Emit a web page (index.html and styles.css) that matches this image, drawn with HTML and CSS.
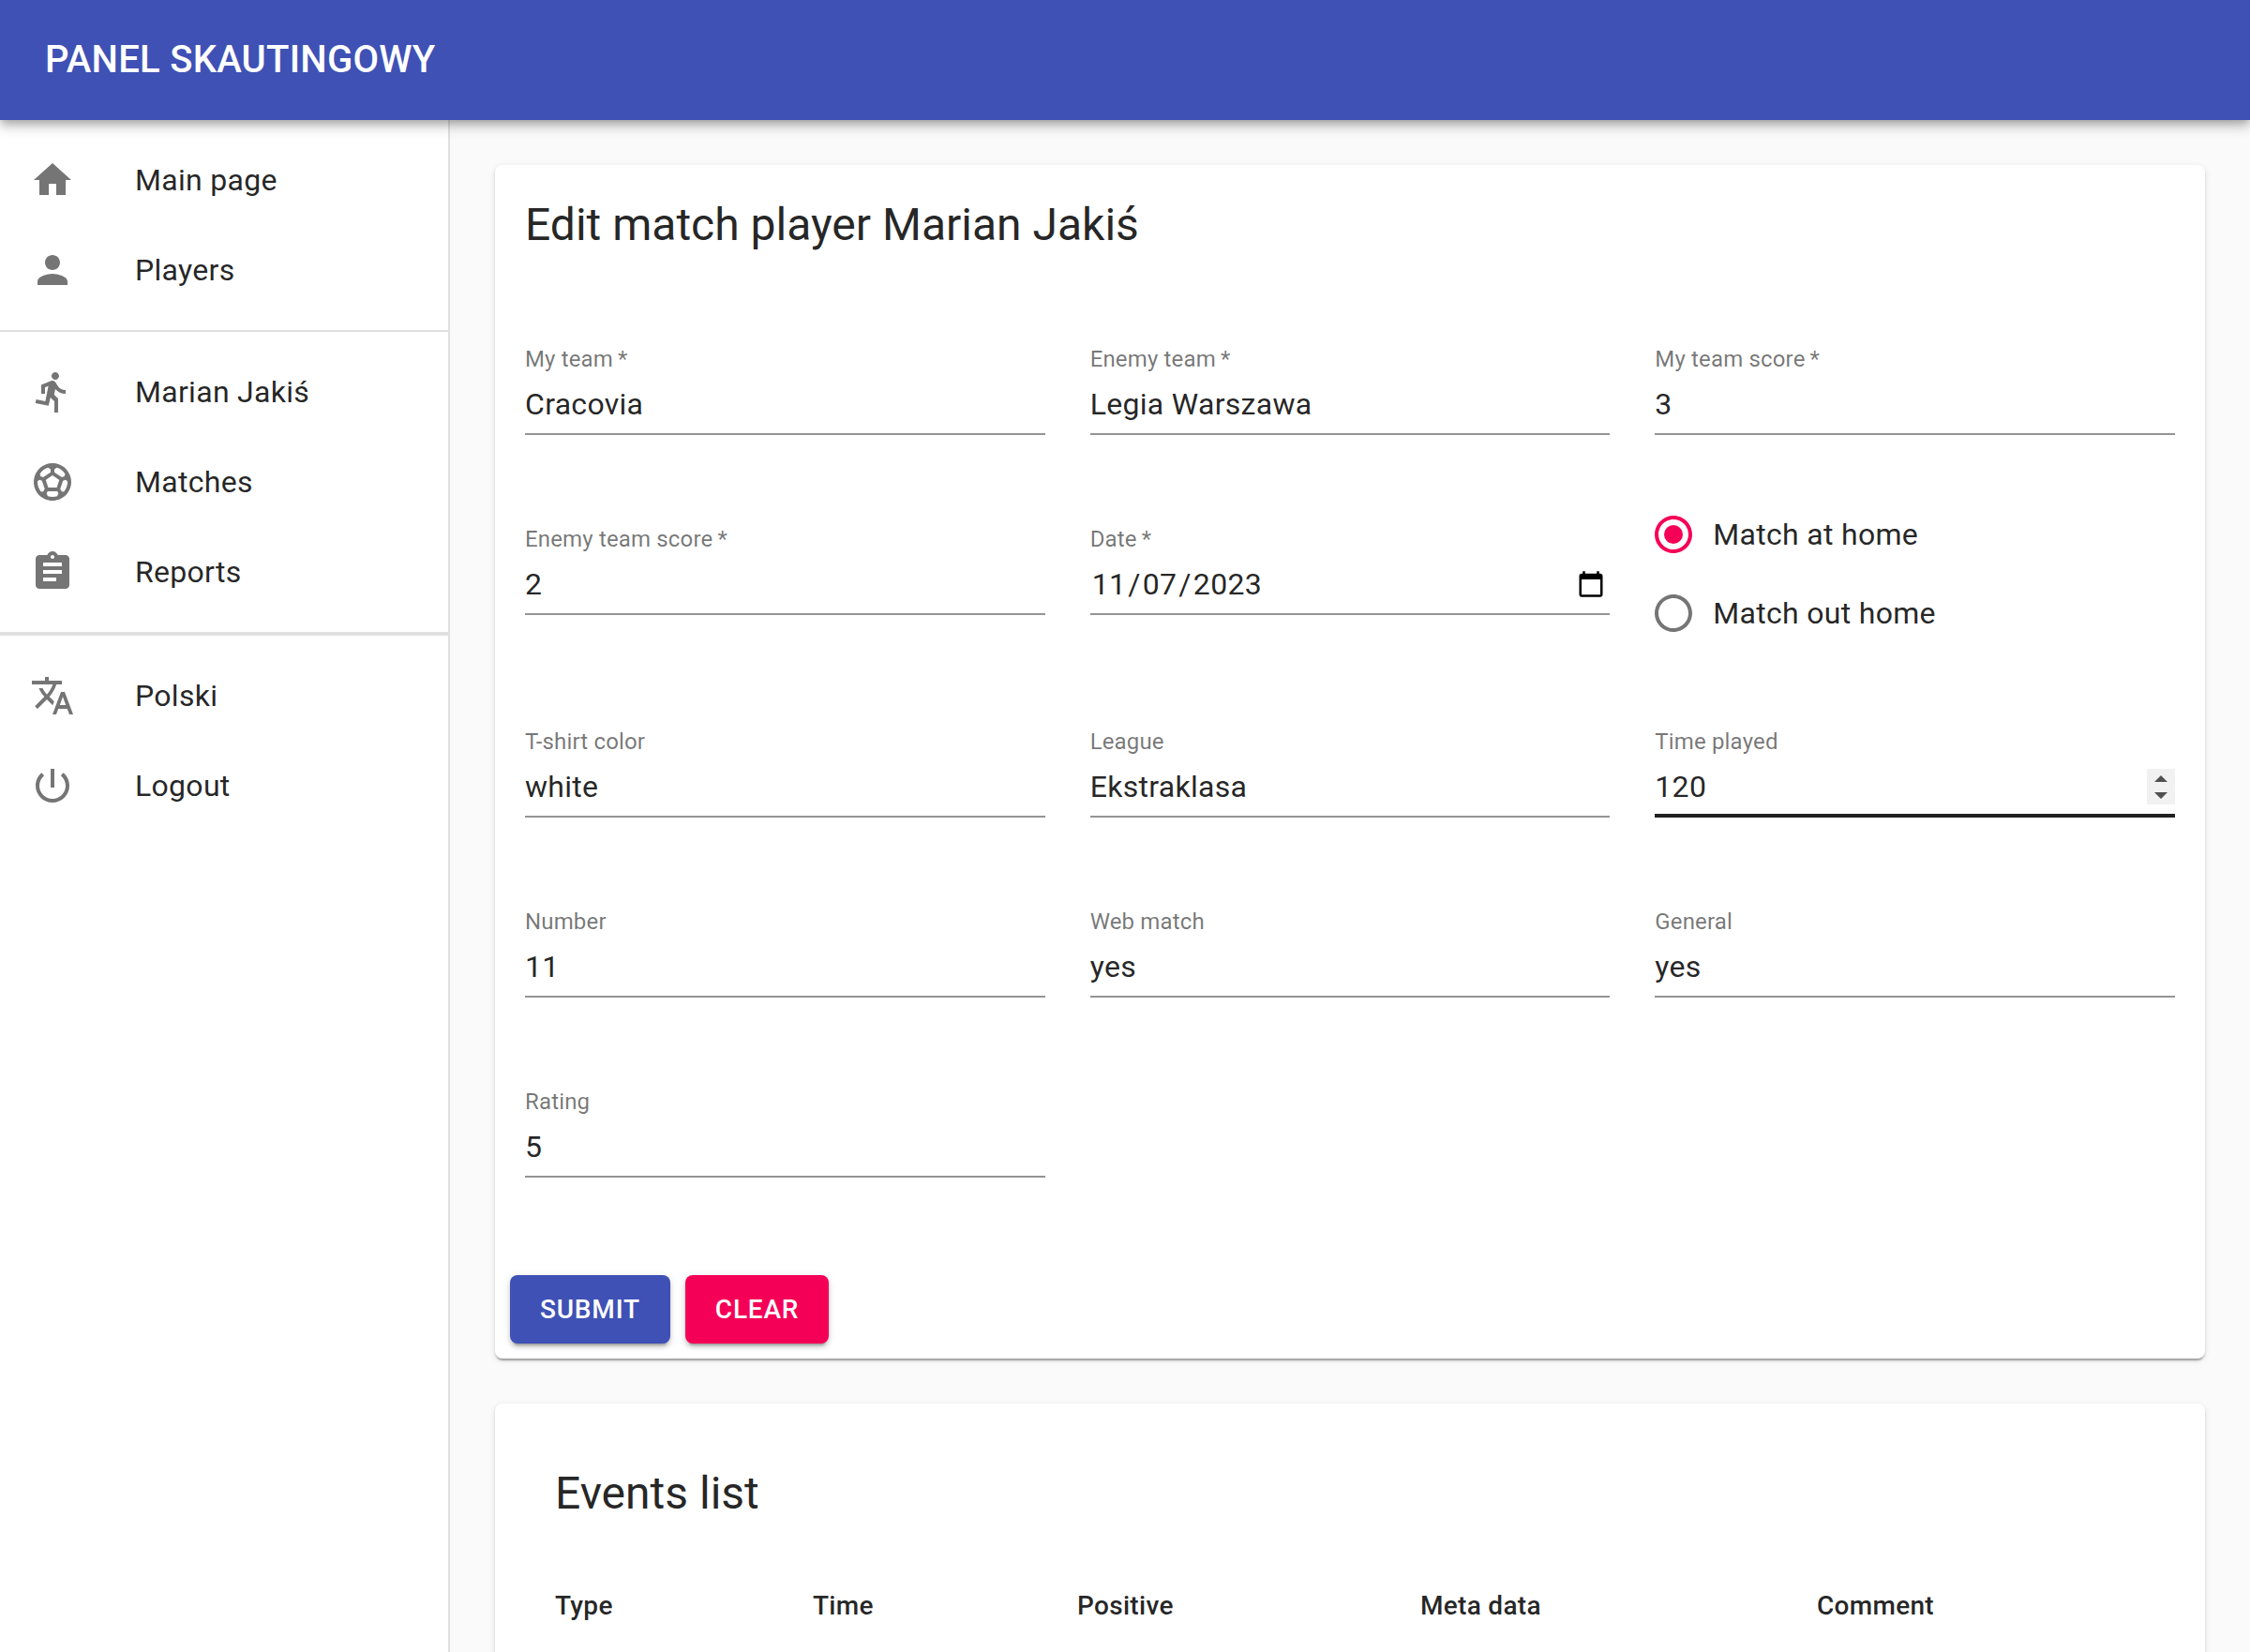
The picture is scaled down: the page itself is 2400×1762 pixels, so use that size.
FILE: index.html
```html
<!DOCTYPE html>
<html lang="en">
<head>
<meta charset="utf-8">
<title>Panel skautingowy</title>
<link rel="stylesheet" href="styles.css">
</head>
<body>
<div class="app">
  <header class="app-bar"><h1 class="app-title">PANEL SKAUTINGOWY</h1></header>
  <div class="layout">
    <nav class="drawer">
      <ul class="nav-list">
        <li class="nav-item"><svg class="icon" viewBox="0 0 24 24"><path d="M10 20v-6h4v6h5v-8h3L12 3 2 12h3v8z"/></svg><span>Main page</span></li>
        <li class="nav-item"><svg class="icon" viewBox="0 0 24 24"><path d="M12 12c2.21 0 4-1.79 4-4s-1.79-4-4-4-4 1.79-4 4 1.79 4 4 4zm0 2c-2.67 0-8 1.34-8 4v2h16v-2c0-2.66-5.33-4-8-4z"/></svg><span>Players</span></li>
      </ul>
      <hr class="divider">
      <ul class="nav-list">
        <li class="nav-item"><svg class="icon" viewBox="0 0 24 24"><path d="M13.49 5.48c1.1 0 2-.9 2-2s-.9-2-2-2-2 .9-2 2 .9 2 2 2zm-3.6 13.9l1-4.4 2.1 2v6h2v-7.5l-2.1-2 .6-3c1.3 1.5 3.3 2.5 5.5 2.5v-2c-1.9 0-3.5-1-4.3-2.4l-1-1.6c-.4-.6-1-1-1.7-1-.3 0-.5.1-.8.1l-5.2 2.2v4.7h2v-3.4l1.8-.7-1.6 8.1-4.9-1-.4 2 7 1.4z"/></svg><span>Marian Jakiś</span></li>
        <li class="nav-item"><svg class="icon" viewBox="0 0 24 24"><path d="M12 2C6.48 2 2 6.48 2 12s4.48 10 10 10 10-4.48 10-10S17.52 2 12 2zm1 3.3l1.35-.95c1.82.56 3.37 1.76 4.38 3.34l-.39 1.34-1.35.46L13 6.9V5.3zm-3.35-.95L11 5.3v1.6L7.01 9.49l-1.35-.46-.39-1.34c1.01-1.57 2.56-2.77 4.38-3.34zM7.08 17.11l-1.14.1C4.73 15.81 4 13.99 4 12c0-.12.01-.23.02-.35l1-.73 1.38.48 1.46 4.34-.78 1.37zm7.42 2.48c-.79.26-1.63.41-2.5.41s-1.71-.15-2.5-.41l-.69-1.49.64-1.1h5.11l.64 1.11-.7 1.48zM14.27 15H9.73l-1.35-4.02L12 8.44l3.63 2.54L14.27 15zm3.79 2.21l-1.14-.1-.79-1.37 1.46-4.34 1.39-.47 1 .73c.01.11.02.22.02.34 0 1.99-.73 3.81-1.94 5.21z"/></svg><span>Matches</span></li>
        <li class="nav-item"><svg class="icon" viewBox="0 0 24 24"><path d="M19 3h-4.18C14.4 1.84 13.3 1 12 1c-1.3 0-2.4.84-2.82 2H5c-1.1 0-2 .9-2 2v14c0 1.1.9 2 2 2h14c1.1 0 2-.9 2-2V5c0-1.1-.9-2-2-2zm-7 0c.55 0 1 .45 1 1s-.45 1-1 1-1-.45-1-1 .45-1 1-1zm2 14H7v-2h7v2zm3-4H7v-2h10v2zm0-4H7V7h10v2z"/></svg><span>Reports</span></li>
      </ul>
      <hr class="divider">
      <hr class="divider">
      <ul class="nav-list">
        <li class="nav-item"><svg class="icon" viewBox="0 0 24 24"><path d="M12.87 15.07l-2.54-2.51.03-.03c1.74-1.94 2.98-4.17 3.71-6.53H17V4h-7V2H8v2H1v1.99h11.17C11.5 7.92 10.44 9.75 9 11.35 8.07 10.32 7.3 9.19 6.69 8h-2c.73 1.63 1.73 3.17 2.98 4.56l-5.09 5.02L4 19l5-5 3.11 3.11.76-2.04zM18.5 10h-2L12 22h2l1.12-3h4.75L21 22h2l-4.5-12zm-2.62 7l1.62-4.33L19.12 17h-3.24z"/></svg><span>Polski</span></li>
        <li class="nav-item"><svg class="icon" viewBox="0 0 24 24"><path d="M13 3h-2v10h2V3zm4.83 2.17l-1.42 1.42C17.99 7.86 19 9.81 19 12c0 3.87-3.13 7-7 7s-7-3.13-7-7c0-2.19 1.01-4.14 2.58-5.42L6.17 5.17C4.23 6.82 3 9.26 3 12c0 4.97 4.03 9 9 9s9-4.03 9-9c0-2.74-1.23-5.18-3.17-6.83z"/></svg><span>Logout</span></li>
      </ul>
    </nav>
    <main class="content">
      <section class="card">
        <h2 class="card-title">Edit match player Marian Jakiś</h2>
        <div class="form-grid">
          <div class="field"><span class="label">My team&thinsp;*</span><div class="value">Cracovia</div></div>
          <div class="field"><span class="label">Enemy team&thinsp;*</span><div class="value">Legia Warszawa</div></div>
          <div class="field"><span class="label">My team score&thinsp;*</span><div class="value">3</div></div>
          <div class="field"><span class="label">Enemy team score&thinsp;*</span><div class="value">2</div></div>
          <div class="field"><span class="label">Date&thinsp;*</span>
            <div class="value">
              <span class="date"><span class="date-part">11</span>/<span class="date-part">07</span>/<span class="date-part">2023</span></span>
              <svg class="calendar" viewBox="0 0 24 24"><path d="M20 3h-1V1h-2v2H7V1H5v2H4c-1.1 0-2 .9-2 2v16c0 1.1.9 2 2 2h16c1.1 0 2-.9 2-2V5c0-1.1-.9-2-2-2zm0 18H4V8h16v13z"/></svg>
            </div>
          </div>
          <div class="radio-group">
            <div class="radio radio-checked"><svg class="icon" viewBox="0 0 24 24"><path d="M12 2C6.48 2 2 6.48 2 12s4.48 10 10 10 10-4.48 10-10S17.52 2 12 2zm0 18c-4.42 0-8-3.58-8-8s3.58-8 8-8 8 3.58 8 8-3.58 8-8 8z"/><circle cx="12" cy="12" r="5"/></svg><span>Match at home</span></div>
            <div class="radio"><svg class="icon" viewBox="0 0 24 24"><path d="M12 2C6.48 2 2 6.48 2 12s4.48 10 10 10 10-4.48 10-10S17.52 2 12 2zm0 18c-4.42 0-8-3.58-8-8s3.58-8 8-8 8 3.58 8 8-3.58 8-8 8z"/></svg><span>Match out home</span></div>
          </div>
          <div class="field"><span class="label">T-shirt color</span><div class="value">white</div></div>
          <div class="field"><span class="label">League</span><div class="value">Ekstraklasa</div></div>
          <div class="field"><span class="label">Time played</span>
            <div class="value value-active">120
              <svg class="spinner" viewBox="0 0 30 38"><path class="spinner-track" d="M0 0h30v38H0z"/><path d="M8 14l7-7 7 7zM8 25h14l-7 7z"/></svg>
            </div>
          </div>
          <div class="field"><span class="label">Number</span><div class="value">11</div></div>
          <div class="field"><span class="label">Web match</span><div class="value">yes</div></div>
          <div class="field"><span class="label">General</span><div class="value">yes</div></div>
          <div class="field"><span class="label">Rating</span><div class="value">5</div></div>
        </div>
        <div class="actions">
          <button class="button button-primary">SUBMIT</button>
          <button class="button button-secondary">CLEAR</button>
        </div>
      </section>
      <section class="card events">
        <h2 class="events-title">Events list</h2>
        <div class="table-head">
          <span>Type</span><span>Time</span><span>Positive</span><span>Meta data</span><span>Comment</span>
        </div>
      </section>
    </main>
  </div>
</div>
</body>
</html>
```
FILE: styles.css
```css
* { box-sizing: border-box; }

body {
  margin: 0;
  background: #fafafa;
  color: rgba(0, 0, 0, 0.87);
  font-family: Roboto, "Liberation Sans", sans-serif;
  font-size: 32px;
  line-height: 48px;
  letter-spacing: 0.00938em;
  -webkit-font-smoothing: antialiased;
}

.app {
  display: flex;
  flex-direction: column;
  height: 1762px;
  overflow: hidden;
}

.app-bar {
  display: flex;
  flex: none;
  align-items: center;
  height: 128px;
  padding: 0 48px;
  position: relative;
  z-index: 2;
  background: #3f51b5;
  color: #fff;
  box-shadow: 0 4px 8px -2px rgba(0, 0, 0, 0.2), 0 8px 10px 0 rgba(0, 0, 0, 0.14), 0 2px 20px 0 rgba(0, 0, 0, 0.12);
}

.app-title {
  margin: 0;
  font-size: 40px;
  font-weight: 500;
  line-height: 64px;
  letter-spacing: 0.0065em;
}

.layout {
  display: flex;
  flex: 1;
  min-height: 0;
}

.drawer {
  flex: none;
  width: 480px;
  background: #fff;
  border-right: 2px solid #e0e0e0;
}

.nav-list {
  margin: 0;
  padding: 16px 0;
  list-style: none;
}

.nav-item {
  display: flex;
  align-items: center;
  gap: 64px;
  height: 96px;
  padding: 0 32px;
}

.icon {
  flex: none;
  width: 48px;
  height: 48px;
  fill: #757575;
}

.divider {
  height: 2px;
  margin: 0;
  border: 0;
  background: #e0e0e0;
}

.content {
  display: flex;
  flex: 1;
  flex-direction: column;
  gap: 48px;
  padding: 48px;
}

.card {
  flex: none;
  background: #fff;
  border-radius: 8px;
  box-shadow: 0 4px 2px -2px rgba(0, 0, 0, 0.2), 0 2px 2px 0 rgba(0, 0, 0, 0.14), 0 2px 6px 0 rgba(0, 0, 0, 0.12);
}

.card-title,
.events-title {
  margin: 0;
  padding: 32px;
  font-size: 48px;
  font-weight: 400;
  line-height: 64px;
  letter-spacing: 0;
}

.form-grid {
  display: grid;
  grid-template-columns: repeat(3, 1fr);
  gap: 48px;
  padding: 32px 32px 72px;
}

.field {
  display: flex;
  flex-direction: column;
  height: 96px;
  margin: 32px 0 16px;
}

.label {
  height: 32px;
  padding-top: 3px;
  color: rgba(0, 0, 0, 0.54);
  font-size: 24px;
  line-height: 24px;
  letter-spacing: 0.0065em;
}

.value {
  display: flex;
  align-items: center;
  justify-content: space-between;
  height: 64px;
  padding: 12px 0;
  border-bottom: 2px solid #949494;
  line-height: 38px;
}

.value-active {
  padding-bottom: 10px;
  border-bottom: 4px solid #212121;
}

.date { display: flex; }

.date-part { padding: 0 2px; }

.calendar {
  width: 30px;
  height: 30px;
  margin-right: 5px;
}

.spinner {
  width: 30px;
  height: 38px;
  fill: #505050;
}

.spinner-track { fill: #f1f1f1; }

.radio {
  display: flex;
  align-items: center;
  gap: 18px;
  height: 84px;
  margin-left: -4px;
}

.radio-checked .icon { fill: #f50057; }

.actions {
  display: flex;
  gap: 16px;
  padding: 16px;
}

.button {
  padding: 12px 32px;
  border: 0;
  border-radius: 8px;
  color: #fff;
  font: 500 28px/49px Roboto, sans-serif;
  letter-spacing: 0.02857em;
  box-shadow: 0 6px 2px -4px rgba(0, 0, 0, 0.2), 0 4px 4px 0 rgba(0, 0, 0, 0.14), 0 2px 10px 0 rgba(0, 0, 0, 0.12);
}

.button-primary { background: #3f51b5; }

.button-secondary { background: #f50057; }

.events {
  height: 420px;
  padding: 32px;
}

.table-head {
  display: grid;
  grid-template-columns: 275px 282px 366px 423px 1fr;
  padding: 32px;
  font-size: 28px;
  font-weight: 500;
  letter-spacing: 0.01071em;
}
```
